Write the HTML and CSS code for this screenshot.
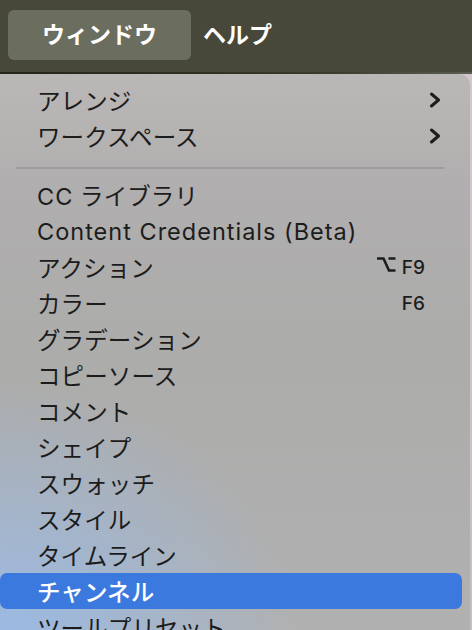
FILE: index.html
```html
<!DOCTYPE html>
<html lang="ja">
<head>
<meta charset="utf-8">
<link rel="stylesheet" href="styles.css">
</head>
<body>
<div class="screen">
  <header class="menubar">
    <div class="mb-item active">ウィンドウ</div>
    <div class="mb-item">ヘルプ</div>
  </header>
  <div class="strip"></div>
  <div class="below">
    <nav class="menu">
      <div class="row"><span class="label">アレンジ</span><svg class="chev" viewBox="0 0 12 16" width="12" height="16"><path d="M2.5 2 L9.5 8 L2.5 14" fill="none" stroke="#1d1d1d" stroke-width="3" stroke-linecap="round" stroke-linejoin="round"/></svg></div>
      <div class="row"><span class="label">ワークスペース</span><svg class="chev" viewBox="0 0 12 16" width="12" height="16"><path d="M2.5 2 L9.5 8 L2.5 14" fill="none" stroke="#1d1d1d" stroke-width="3" stroke-linecap="round" stroke-linejoin="round"/></svg></div>
      <div class="sep"></div>
      <div class="row"><span class="label"><span class="lat">CC</span> ライブラリ</span></div>
      <div class="row"><span class="label lat">Content Credentials (Beta)</span></div>
      <div class="row"><span class="label">アクション</span><span class="key"><svg class="opt" viewBox="0 0 20 17" width="20" height="17"><path d="M1 2.5 H7.5 L13 14.5 H19.5 M12.5 2.5 H19.5" fill="none" stroke="#1d1d1d" stroke-width="2.6" stroke-linejoin="miter"/></svg>F9</span></div>
      <div class="row"><span class="label">カラー</span><span class="key">F6</span></div>
      <div class="row"><span class="label">グラデーション</span></div>
      <div class="row"><span class="label">コピーソース</span></div>
      <div class="row"><span class="label">コメント</span></div>
      <div class="row"><span class="label">シェイプ</span></div>
      <div class="row"><span class="label">スウォッチ</span></div>
      <div class="row"><span class="label">スタイル</span></div>
      <div class="row"><span class="label">タイムライン</span></div>
      <div class="row selected"><span class="label">チャンネル</span></div>
      <div class="row"><span class="label">ツールプリセット</span></div>
    </nav>
  </div>
</div>
</body>
</html>
```
FILE: styles.css
```css
html, body {
  margin: 0;
  padding: 0;
}
body {
  width: 472px;
  height: 630px;
  overflow: hidden;
  background: #c6c0c3;
  font-family: "Inter", "Noto Sans CJK JP", sans-serif;
}
.screen {
  width: 472px;
  height: 630px;
  overflow: hidden;
  display: flex;
  flex-direction: column;
}
.menubar {
  height: 72px;
  flex: none;
  background: #47483a;
  display: flex;
  align-items: center;
  padding-left: 8px;
  gap: 12px;
  box-sizing: border-box;
}
.mb-item {
  color: #ffffff;
  font-size: 23px;
  font-weight: 600;
  line-height: 50px;
  height: 50px;
  margin-top: -2px;
}
.mb-item.active {
  width: 183px;
  text-align: center;
  background: #6b6d5e;
  border-radius: 6px;
}
.strip {
  height: 2px;
  flex: none;
  background: linear-gradient(90deg, #24251b 0%, #2d3021 40%, #3a3d2d 70%, #5b5d52 100%);
}
.below {
  flex: 1;
  display: flex;
  background: linear-gradient(180deg, #d3c7ce 0%, #c3bfc1 100%);
}
.menu {
  width: 470px;
  box-sizing: border-box;
  padding: 8px 8px 0 0;
  border-top-right-radius: 11px;
  background:
    radial-gradient(ellipse 300px 260px at 0% 100%, rgba(150, 188, 238, 0.85), rgba(150, 188, 238, 0) 100%),
    linear-gradient(180deg, #bbb7b7 0%, #b0aeae 20%, #acacab 50%, #b1b1b1 100%);
}
.row {
  height: 36px;
  display: flex;
  align-items: center;
  padding: 0 21px 0 37px;
  color: #1c1c1c;
  font-size: 23.5px;
  border-radius: 7px;
}
.label {
  flex: 1;
  white-space: nowrap;
  letter-spacing: 0.1px;
}
.lat {
  letter-spacing: 1px;
}
.chev {
  flex: none;
}
.key {
  display: flex;
  align-items: center;
  gap: 6px;
  margin-right: 16px;
  font-size: 19px;
  font-weight: 500;
  color: #1c1c1c;
}
.opt {
  margin-top: -6px;
}
.sep {
  height: 2px;
  background: #9d9d9d;
  margin: 13px 18px 8px 16px;
}
.row.selected {
  background: #3b79df;
  color: #ffffff;
  font-weight: 500;
}
```
